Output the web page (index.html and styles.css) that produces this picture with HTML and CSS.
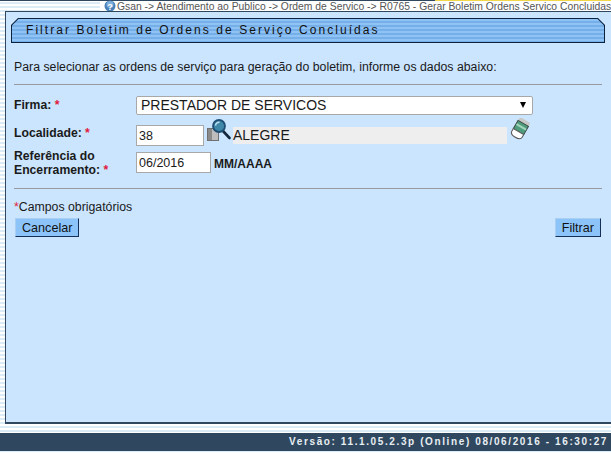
FILE: index.html
```html
<!DOCTYPE html>
<html lang="pt">

<head>
    <meta charset="UTF-8">
    <title>Filtrar Boletim de Ordens de Serviço Concluídas</title>
    <link rel="stylesheet" href="styles.css">
</head>

<body>
    <div class="top-line">
        <div class="top-line-dark"></div>
        <div class="top-line-yellow"></div>
    </div>

    <div class="breadcrumb">
        <svg class="help-icon" width="12" height="12" viewBox="0 0 12 12">
            <circle cx="6" cy="6" r="5.5" fill="#4a80b8"/>
            <circle cx="6" cy="4.5" r="3.5" fill="#7fb0dc"/>
            <text x="6" y="9.5" text-anchor="middle" class="help-mark">?</text>
        </svg>
        <span>Gsan -&gt; Atendimento ao Publico -&gt; Ordem de Servico -&gt; R0765 - Gerar Boletim Ordens Servico Concluidas</span>
    </div>

    <div class="panel">
        <div class="title-tab">
            <div class="title-inner">Filtrar Boletim de Ordens de Serviço Concluídas</div>
        </div>

        <p class="intro">Para selecionar as ordens de serviço para geração do boletim, informe os dados abaixo:</p>
        <hr class="divider">

        <form class="filter-form">
            <div class="form-row row-firma">
                <label>Firma: <span class="req">*</span></label>
                <div class="select-box">
                    <span>PRESTADOR DE SERVICOS</span>
                    <span class="select-arrow"></span>
                </div>
            </div>

            <div class="form-row row-local">
                <label>Localidade: <span class="req">*</span></label>
                <input class="input-local" type="text" value="38">
                <svg class="search-icon" width="24" height="22" viewBox="0 0 24 22">
                    <rect x="0.5" y="9.5" width="11" height="12" fill="#bdbdbd" stroke="#707070"/>
                    <rect x="1" y="10" width="4" height="11" fill="#8a8a8a"/>
                    <path d="M16 12 L22.5 19" stroke="#14283c" stroke-width="2.6" stroke-linecap="round"/>
                    <circle cx="12" cy="7" r="6" fill="#3f87a8" stroke="#1f4e74" stroke-width="1.8"/>
                    <path d="M8.5 6.5 A3.6 3.6 0 0 1 12.5 3.2" stroke="#bfe3f2" stroke-width="1.5" fill="none"/>
                </svg>
                <div class="local-name">ALEGRE</div>
                <svg class="eraser-icon" width="20" height="22" viewBox="0 0 20 22">
                    <g transform="rotate(30 10 11)">
                        <rect x="4" y="0.5" width="12" height="6" rx="1.5" fill="#c8c8c8"/>
                        <rect x="4" y="4.5" width="12" height="9.5" fill="#4f9d7c" stroke="#3c4a44"/>
                        <rect x="4.5" y="7.5" width="11" height="2" fill="#a3d6bd"/>
                        <path d="M4 14 H16 V17 Q16 20.5 10 20.5 Q4 20.5 4 17 Z" fill="#fff" stroke="#555"/>
                    </g>
                </svg>
            </div>

            <div class="form-row row-ref">
                <label>Referência do Encerramento: <span class="req">*</span></label>
                <input class="input-ref" type="text" value="06/2016">
                <strong class="hint">MM/AAAA</strong>
            </div>
        </form>

        <hr class="divider divider-bottom">
        <p class="required-note"><span class="req">*</span>Campos obrigatórios</p>

        <div class="actions">
            <button type="button" class="btn">Cancelar</button>
            <button type="button" class="btn">Filtrar</button>
        </div>
    </div>

    <div class="footer-gap"></div>
    <div class="footer">Versão: 11.1.05.2.3p (Online) 08/06/2016 - 16:30:27</div>
</body>

</html>
```

FILE: styles.css
```css
* {
    margin: 0;
    padding: 0;
    box-sizing: border-box;
    font-family: "Liberation Sans", Arial, sans-serif;
}

html,
body {
    height: 453px;
    overflow: hidden;
}

body {
    display: flex;
    flex-direction: column;
    font-size: 12px;
    color: #1a1a1a;
    background: repeating-linear-gradient(to bottom, #ffffff 0, #ffffff 2px, #dcecf6 2px, #dcecf6 4px);
}

.top-line {
    display: flex;
    height: 1px;
}

.top-line-dark {
    width: 435px;
    background: #2f4860;
}

.top-line-yellow {
    flex: 1;
    background: #f2d64a;
}

.breadcrumb {
    display: flex;
    align-items: center;
    gap: 1px;
    height: 10px;
    margin-left: 100px;
    padding-left: 4px;
    white-space: nowrap;
    font-size: 10.35px;
    color: #555;
    background: #fff;
}

.help-icon {
    flex: none;
}

.help-mark {
    font-size: 9px;
    font-weight: bold;
    fill: #fff;
}

.panel {
    height: 413px;
    margin-left: 5px;
    padding: 6px 0 0 5px;
    background: #cbe5fe;
    border-top: 1px solid #2f4860;
    border-left: 1px solid #2f4860;
    border-bottom: 2px solid #2f4860;
}

.title-tab {
    width: 594px;
    height: 25px;
    padding: 1px;
    background: #0c2340;
    clip-path: polygon(7px 0, calc(100% - 7px) 0, 100% 7px, 100% 100%, 0 100%, 0 7px);
}

.title-inner {
    height: 23px;
    padding-left: 14px;
    line-height: 23px;
    letter-spacing: 2.06px;
    color: #111;
    background: repeating-linear-gradient(to bottom, #8fc2f5 0, #8fc2f5 2px, #76aee8 2px, #76aee8 4px);
    clip-path: polygon(6.5px 0, calc(100% - 6.5px) 0, 100% 6.5px, 100% 100%, 0 100%, 0 6.5px);
}

.intro {
    margin: 17px 0 0 3px;
    font-size: 12.3px;
    line-height: 14px;
}

.divider {
    width: 588px;
    margin-left: 3px;
    border: none;
    border-top: 1px solid #9a9a9a;
}

.intro + .divider {
    margin-top: 10px;
}

.filter-form {
    margin-top: 11px;
    margin-left: 3px;
}

.form-row {
    display: flex;
    align-items: flex-start;
}

.form-row label {
    flex: none;
    width: 122px;
    font-size: 12.2px;
    font-weight: bold;
    line-height: 14px;
}

.req {
    color: #e0203a;
}

.row-firma label {
    padding-top: 2px;
}

.select-box {
    display: flex;
    align-items: center;
    justify-content: space-between;
    width: 397px;
    height: 19px;
    padding: 0 6px 1px 4px;
    font-size: 14px;
    background: #fff;
    border: 1px solid #a8a8a8;
    border-radius: 2px;
}

.select-arrow {
    width: 0;
    height: 0;
    border-left: 3.5px solid transparent;
    border-right: 3.5px solid transparent;
    border-top: 6px solid #000;
}

.row-local {
    height: 30px;
    margin-top: 8px;
}

.row-local label {
    padding-top: 3px;
}

input {
    height: 21px;
    padding: 0 2px;
    font-size: 12.5px;
    color: #1a1a1a;
    background: #fff;
    border: 1px solid #a8a8a8;
}

.input-local {
    width: 68px;
    margin-top: 2px;
}

.search-icon {
    flex: none;
    margin-left: 3px;
    margin-top: -4px;
}

.local-name {
    width: 274px;
    height: 17px;
    margin-left: 2px;
    margin-top: 4px;
    font-size: 14px;
    line-height: 17px;
    background: #eeeeee;
}

.eraser-icon {
    flex: none;
    margin-left: 3px;
    margin-top: -5px;
}

.row-ref label {
    margin-top: -4px;
}

.input-ref {
    width: 75px;
    margin-top: -1px;
}

.hint {
    margin-left: 3px;
    margin-top: 4px;
}

.divider-bottom {
    margin-top: 11px;
}

.required-note {
    margin: 11px 0 0 3px;
    font-size: 12.3px;
    line-height: 14px;
}

.actions {
    display: flex;
    justify-content: space-between;
    width: 586px;
    margin-top: 4px;
    margin-left: 4px;
}

.btn {
    height: 19px;
    padding: 0 6px;
    font-size: 12.6px;
    color: #111;
    background: #8cc4fa;
    border: 1px solid #a9d0f2;
    border-right-color: #14305a;
    border-bottom-color: #14305a;
}

.footer-gap {
    height: 9px;
    flex: none;
}

.footer {
    flex: none;
    height: 18px;
    padding-right: 3px;
    line-height: 18px;
    text-align: right;
    font-size: 10px;
    font-weight: bold;
    letter-spacing: 1.61px;
    color: #e8eef2;
    background: #2f4860;
}
```
